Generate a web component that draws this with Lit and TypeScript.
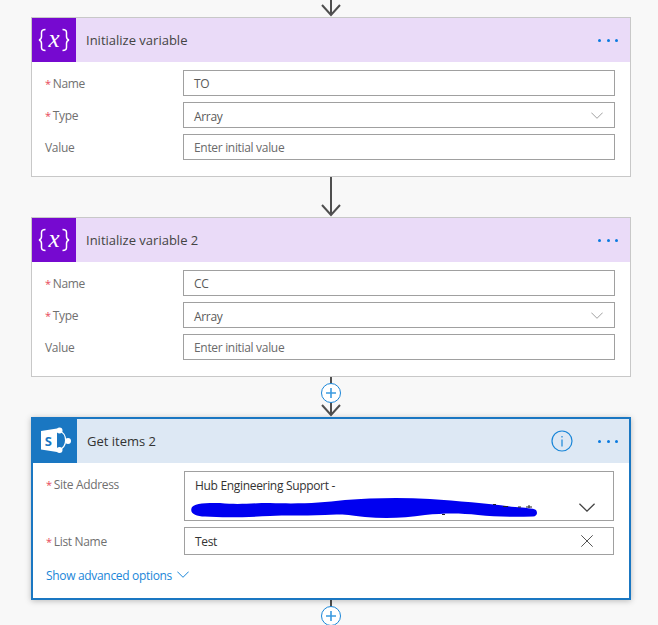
import { LitElement, html, css, svg } from "lit";
import { customElement } from "lit/decorators.js";

const arrow = (h: number, plus = false, head = true) => html`<svg class="conn" width="658" height=${h} viewBox="0 0 658 ${h}">
  ${svg`<line x1="331" y1="0" x2="331" y2=${h - 2} stroke="#4f4f4f" stroke-width="2"/>`}
  ${head ? svg`<path d="M322 ${h - 12} L331 ${h - 2} L340 ${h - 12}" fill="none" stroke="#4f4f4f" stroke-width="2"/>` : ""}
  ${plus ? svg`<circle cx="331" cy="16" r="9.5" fill="#fff" stroke="#1a86d8" stroke-width="1"/><path d="M326 16H336M331 11V21" stroke="#3a9ae0" stroke-width="1.6"/>` : ""}
</svg>`;

const chevron = (color: string, w = 12, h = 7) => html`<svg class="chev" width=${w} height=${h} viewBox="0 0 12 7" preserveAspectRatio="none"><path d="M0.3 0.6 L6 6.3 L11.7 0.6" fill="none" stroke=${color} stroke-width="1"/></svg>`;

const varIcon = html`<svg width="44" height="44" viewBox="0 0 44 44" fill="none" stroke="#fff">
  <path d="M13.500 11.500c-3 0-4 1-4 3v4c0 2-.5 3-2.500 3.500 2 .5 2.500 1.500 2.500 3.500v4c0 2 1 3 4 3" stroke-width="1.500"/>
  <path d="M30.500 11.500c3 0 4 1 4 3v4c0 2 .5 3 2.500 3.500-2 .5-2.500 1.500-2.500 3.500v4c0 2-1 3-4 3" stroke-width="1.500"/>
  <text x="22" y="28.500" text-anchor="middle" font-family="Liberation Serif, serif" font-style="italic" font-size="25" fill="#fff" stroke="none">x</text>
</svg>`;

const spIcon = html`<svg width="44" height="44" viewBox="0 0 44 44">
  <path d="M26 11.500 A10.500 10.500 0 0 1 26 31" fill="none" stroke="#fff" stroke-width="1.200"/>
  <circle cx="26.500" cy="11.500" r="3" fill="#fff"/><circle cx="35" cy="22" r="3" fill="#fff"/><circle cx="26.500" cy="31" r="3" fill="#fff"/>
  <path d="M8 12 L24 9.500 V33 L8 30.500Z" fill="#fff"/>
  <text x="11.800" y="27" font-family="Open Sans, sans-serif" font-weight="700" font-size="13" fill="#1a77c2">S</text>
</svg>`;

const dots = html`<span class="dots"><i></i><i></i><i></i></span>`;

@customElement("app-root")
export class AppRoot extends LitElement {
  static styles = css`
    :host { display: block; width: 658px; height: 625px; overflow: hidden; background: #f8f8f8;
      font-family: "Open Sans", "Noto Sans", sans-serif; font-size: 12px; }
    .conn { display: block; }
    .card { position: relative; box-sizing: border-box; width: 600px; margin-left: 31px; background: #fff; border: 1px solid #c8c8c8; }
    .head { display: flex; align-items: center; height: 44px; background: #eadbf8; color: #444; font-size: 13px; }
    .icon { width: 44px; height: 44px; flex: none; background: #7609d0; margin-right: 10px; }
    .title { flex: 1; }
    .dots { display: flex; gap: 5.500px; margin-right: 12px; }
    .dots i { width: 3px; height: 3px; border-radius: 50%; background: #0a7ae0; }
    .form { display: flex; flex-direction: column; gap: 6px; padding: 8px 15px 16px 13px; letter-spacing: -0.32px; }
    .row { display: flex; align-items: center; height: 26px; }
    .label { width: 138px; flex: none; color: #707070; }
    .req { color: #e8495a; margin-right: 2px; font-size: 11px; }
    .input { box-sizing: border-box; flex: 1; height: 100%; display: flex; align-items: center; justify-content: space-between;
      border: 1px solid #a0a0a0; padding: 0 11px 0 10px; color: #5a5a5a; background: #fff; }
    .pick { padding-top: 2px; }
    .pick .chev { margin-top: -2px; }
    .ph { color: #6a6a6a; }
    .sel { border: 2px solid #1a77c2; box-shadow: 0 1px 6px rgba(0,0,0,.25); height: 183px; }
    .sel .head { background: #dde8f4; color: #333; }
    .sel .icon { background: #1a77c2; }
    .sel .form { padding: 8px 15px 0 13px; }
    .sel .dots { margin-right: 11px; }
    .sel .input { color: #333; padding-right: 20px; }
    .tall { height: 50px; align-items: flex-start; }
    .tall .label { padding-top: 5px; }
    .tall .input { align-items: flex-start; padding-top: 5px; position: relative; }
    .mid { height: 28px; }
    .tall .chev { position: absolute; right: 18px; bottom: 8px; }
    .info { margin-right: 25px; display: block; }
    .adv { display: flex; align-items: center; gap: 5px; margin-top: 6px; color: #1a86d8; }
    .adv .chev { margin-top: -3px; }
    .scribble { position: absolute; left: 0; top: 0; pointer-events: none; }
  `;

  private varCard(title: string, name: string) {
    return html`<div class="card">
      <div class="head"><div class="icon">${varIcon}</div><div class="title">${title}</div>${dots}</div>
      <div class="form">
        <div class="row"><div class="label"><span class="req">*</span>Name</div><div class="input">${name}</div></div>
        <div class="row"><div class="label"><span class="req">*</span>Type</div><div class="input pick">Array ${chevron("#a0a0a0")}</div></div>
        <div class="row"><div class="label">Value</div><div class="input ph">Enter initial value</div></div>
      </div>
    </div>`;
  }

  render() {
    return html`
      ${arrow(17)}
      ${this.varCard("Initialize variable", "TO")}
      ${arrow(40)}
      ${this.varCard("Initialize variable 2", "CC")}
      ${arrow(40, true)}
      <div class="card sel">
        <div class="head"><div class="icon">${spIcon}</div><div class="title">Get items 2</div>
          <svg class="info" width="22" height="22" viewBox="0 0 22 22"><circle cx="11" cy="11" r="10" fill="none" stroke="#1a86d8" stroke-width="1.200"/><path d="M11 9.500V16.500M11 6V7.500" stroke="#1a86d8" stroke-width="1.200"/></svg>
          ${dots}</div>
        <div class="form">
          <div class="row tall"><div class="label"><span class="req">*</span>Site Address</div>
            <div class="input">Hub Engineering Support - ${chevron("#444", 16, 9)}</div></div>
          <div class="row mid"><div class="label"><span class="req">*</span>List Name</div>
            <div class="input">Test <svg width="12" height="12" viewBox="0 0 12 12"><path d="M.3 .3L11.700 11.700M11.700 .3L.3 11.700" stroke="#555" stroke-width="1"/></svg></div></div>
          <div class="adv">Show advanced options ${chevron("#1a86d8")}</div>
        </div>
        <svg class="scribble" width="596" height="179" viewBox="33 419 596 179">
          <path d="M192 507 C196 503 205 503 220 503 C240 505 250 503 270 503 C300 504 320 503 345 500 C370 498 400 497 430 499 C460 501 490 504 515 507 C525 508 533 508 536 510 C538 513 537 516 533 516.500 C515 517 495 517 478 515 C460 513 445 513 425 515 C405 518 385 519 365 517 C345 514 335 514 325 515 C300 516 285 515 270 516 C250 517 225 518 205 516.500 C195 516 189 513 192 507Z" fill="#0000f0"/>
          <path d="M493 504.500h3M503 506.500h5M518 507h3M526 507h6M529 505v3M442 514.500h3" stroke="#222" stroke-width="1"/>
        </svg>
      </div>
      ${arrow(25, true, false)}
    `;
  }
}
